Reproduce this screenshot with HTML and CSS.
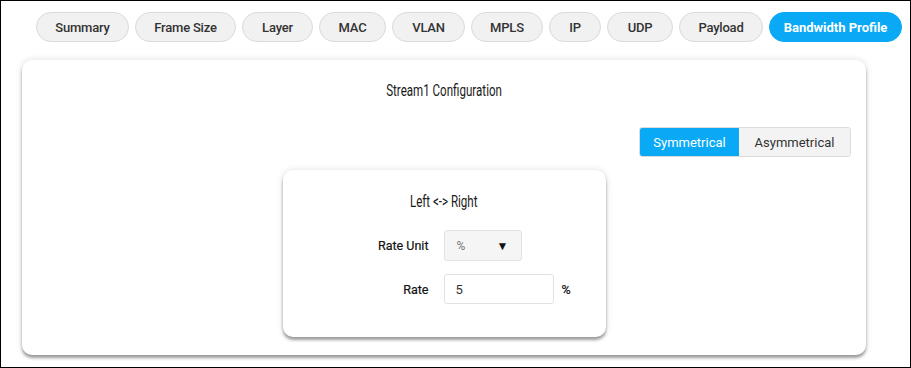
FILE: index.html
```html
<!DOCTYPE html>
<html lang="en">
<head>
    <meta charset="UTF-8">
    <meta name="viewport" content="width=device-width, initial-scale=1.0">
    <title>Bandwidth Profile</title>
    <link rel="stylesheet" href="styles.css">
</head>
<body>
    <div class="frame">
        <div class="tabs">
            <button class="tab">Summary</button>
            <button class="tab">Frame Size</button>
            <button class="tab">Layer</button>
            <button class="tab">MAC</button>
            <button class="tab">VLAN</button>
            <button class="tab">MPLS</button>
            <button class="tab">IP</button>
            <button class="tab">UDP</button>
            <button class="tab">Payload</button>
            <button class="tab active">Bandwidth Profile</button>
        </div>

        <div class="card">
            <div class="title"><span>Stream1 Configuration</span></div>

            <div class="toggle-row">
                <div class="toggle">
                    <button class="toggle-btn sym on">Symmetrical</button>
                    <button class="toggle-btn asym">Asymmetrical</button>
                </div>
            </div>

            <div class="inner">
                <div class="title"><span>Left &lt;-&gt; Right</span></div>
                <div class="form">
                    <label class="lbl">Rate Unit</label>
                    <div class="select">
                        <span>%</span>
                        <span class="arrow">&#9660;</span>
                    </div>
                    <span></span>

                    <label class="lbl">Rate</label>
                    <input class="input" type="text" value="5">
                    <span class="unit">%</span>
                </div>
            </div>
        </div>
    </div>
</body>
</html>
```

FILE: styles.css
```css
body {
    margin: 0;
    font-family: Roboto, 'Liberation Sans', sans-serif;
    background-color: #fff;
    color: #333;
}

.frame {
    height: 368px;
    box-sizing: border-box;
    border: 1px solid #000;
    padding: 11px 0 0 21px;
}

.tabs {
    display: flex;
    gap: 6px;
    margin-left: 14px;
}

.tab {
    flex-shrink: 0;
    white-space: nowrap;
    height: 30px;
    padding: 0;
    font-family: Roboto, sans-serif;
    font-size: 13px;
    font-weight: 500;
    letter-spacing: -0.2px;
    color: #333;
    background-color: #f1f1f1;
    border: 1px solid #dadada;
    border-radius: 15px;
    cursor: pointer;
}

.tab:nth-child(1) { width: 93px; }
.tab:nth-child(2) { width: 101px; }
.tab:nth-child(3) { width: 71px; }
.tab:nth-child(4) { width: 67px; }
.tab:nth-child(5) { width: 73px; }
.tab:nth-child(6) { width: 72px; }
.tab:nth-child(7) { width: 52px; }
.tab:nth-child(8) { width: 66px; }
.tab:nth-child(9) { width: 84px; }
.tab:nth-child(10) { width: 133px; }

.tab.active {
    background-color: #09a9f6;
    border-color: #09a9f6;
    color: #fff;
    font-weight: 700;
    letter-spacing: 0;
}

.card {
    width: 844px;
    height: 295px;
    box-sizing: border-box;
    margin-top: 18px;
    padding: 20px 15px 0;
    background-color: #fff;
    border-radius: 10px;
    box-shadow: 0 3px 3px rgba(0, 0, 0, 0.35), 0 0 7px rgba(0, 0, 0, 0.13);
}

.title {
    text-align: center;
    font-family: Roboto, sans-serif;
    font-size: 17px;
    line-height: 20px;
    color: #1a1a1a;
}

/* narrow headline face, squeezed from Roboto */
.title span {
    display: inline-block;
    white-space: nowrap;
    transform: scaleX(0.68);
}

.toggle-row {
    display: flex;
    justify-content: flex-end;
    margin-top: 27px;
}

.toggle {
    display: flex;
    border: 1px solid #dcdcdc;
    border-radius: 3px;
    overflow: hidden;
}

.toggle-btn {
    height: 28px;
    padding: 0;
    font-family: Roboto, sans-serif;
    font-size: 13px;
    color: #333;
    background-color: #f3f3f3;
    border: none;
    cursor: pointer;
}

.toggle-btn.sym {
    width: 99px;
}

.toggle-btn.asym {
    width: 111px;
}

.toggle-btn.on {
    background-color: #09a9f6;
    color: #fff;
}

.inner {
    width: 323px;
    height: 167px;
    box-sizing: border-box;
    margin: 13px auto 0;
    padding-top: 21px;
    background-color: #fff;
    border-radius: 10px;
    box-shadow: 0 3px 3px rgba(0, 0, 0, 0.35), 0 0 7px rgba(0, 0, 0, 0.13);
}

.form {
    display: grid;
    grid-template-columns: 146px auto auto;
    justify-content: start;
    align-items: center;
    column-gap: 15px;
    row-gap: 13px;
    margin-top: 19px;
}

.lbl {
    text-align: right;
    font-size: 12.5px;
    font-weight: 400;
    color: #111;
    -webkit-text-stroke: 0.2px #111;
}

.select {
    display: flex;
    justify-content: space-between;
    align-items: center;
    width: 78px;
    height: 31px;
    box-sizing: border-box;
    padding: 0 12px;
    background-color: #f5f5f5;
    border: 1px solid #e2e2e2;
    border-radius: 3px;
    font-size: 12px;
    color: #777;
}

.arrow {
    font-size: 12px;
    color: #111;
}

.input {
    width: 110px;
    height: 30px;
    box-sizing: border-box;
    padding: 0 11px;
    font-family: Roboto, sans-serif;
    font-size: 13px;
    color: #333;
    border: 1px solid #e2e2e2;
    border-radius: 3px;
    outline: none;
}

.unit {
    margin-left: -7px;
    font-size: 12.5px;
    color: #111;
    -webkit-text-stroke: 0.2px #111;
}
```
